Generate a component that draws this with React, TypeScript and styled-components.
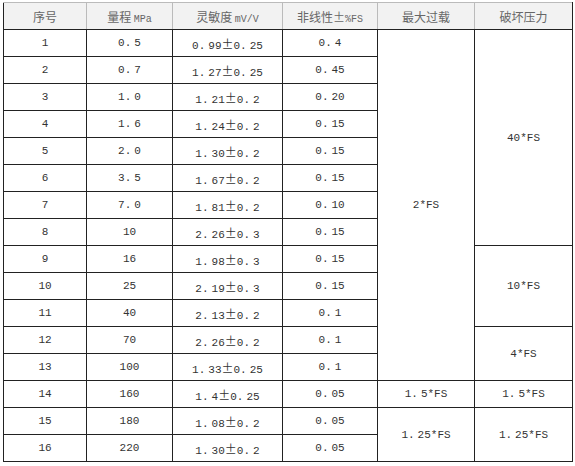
import * as React from 'react';
import styled, { createGlobalStyle } from 'styled-components';

const GlobalStyle = createGlobalStyle`
  body {
    margin: 0;
    background: #fff;
    font-family: 'Liberation Mono', 'Noto Sans CJK SC', monospace;
    font-size: 11px;
    color: #333;
  }
`;

const Table = styled.table`
  margin: 2px 0 0 3px;
  width: 569px;
  border-collapse: collapse;
  table-layout: fixed;
  border-left: 1px solid #222;
  border-right: 1px solid #222;
  border-bottom: 1px solid #222;
`;

const Th = styled.th`
  height: 26px;
  padding: 0;
  background: #f2f2f2;
  border: 1px solid #bbb;
  border-bottom: 1px solid #222;
  font-weight: normal;
  color: #666;
  text-align: center;
  font-family: 'Noto Sans CJK SC', 'Liberation Mono', sans-serif;
  font-size: 12px;

  &:first-child { border-left: 1px solid #222; }
  &:last-child { border-right: 1px solid #222; }
`;

const Unit = styled.span`
  font-family: 'Liberation Mono', monospace;
  font-size: 10px;
`;

const Td = styled.td`
  height: 26px;
  padding: 0;
  border: 1px solid #222;
  text-align: center;
  vertical-align: middle;
  white-space: nowrap;
`;

const Pm = styled.span`
  font-family: 'Noto Sans CJK SC', sans-serif;
  font-size: 12px;
`;

// the narrow gap the source font leaves after each decimal point
const Gap = styled.span`
  display: inline-block;
  width: 3px;
`;

const rows: [string, string, string, string][] = [
  ['1', '0.5', '0.99|0.25', '0.4'],
  ['2', '0.7', '1.27|0.25', '0.45'],
  ['3', '1.0', '1.21|0.2', '0.20'],
  ['4', '1.6', '1.24|0.2', '0.15'],
  ['5', '2.0', '1.30|0.2', '0.15'],
  ['6', '3.5', '1.67|0.2', '0.15'],
  ['7', '7.0', '1.81|0.2', '0.10'],
  ['8', '10', '2.26|0.3', '0.15'],
  ['9', '16', '1.98|0.3', '0.15'],
  ['10', '25', '2.19|0.3', '0.15'],
  ['11', '40', '2.13|0.2', '0.1'],
  ['12', '70', '2.26|0.2', '0.1'],
  ['13', '100', '1.33|0.25', '0.1'],
  ['14', '160', '1.4|0.25', '0.05'],
  ['15', '180', '1.08|0.2', '0.05'],
  ['16', '220', '1.30|0.2', '0.05'],
];

// extra cells for the two merged columns, keyed by row index
const overload: Record<number, [string, number]> = {
  0: ['2*FS', 13],
  13: ['1.5*FS', 1],
  14: ['1.25*FS', 2],
};
const burst: Record<number, [string, number]> = {
  0: ['40*FS', 8],
  8: ['10*FS', 3],
  11: ['4*FS', 2],
  13: ['1.5*FS', 1],
  14: ['1.25*FS', 2],
};

function Num({ v }: { v: string }) {
  const parts = v.split('.');
  return (
    <>
      {parts.map((p, i) => (
        <React.Fragment key={i}>
          {i > 0 && <>.<Gap /></>}
          {p}
        </React.Fragment>
      ))}
    </>
  );
}

function Sens({ v }: { v: string }) {
  const [a, b] = v.split('|');
  return (
    <>
      <Num v={a} />
      <Pm>±</Pm>
      <Num v={b} />
    </>
  );
}

export default function App() {
  return (
    <>
      <GlobalStyle />
      <Table>
        <colgroup>
          <col style={{ width: 83 }} />
          <col style={{ width: 86 }} />
          <col style={{ width: 110 }} />
          <col style={{ width: 95 }} />
          <col style={{ width: 97 }} />
          <col style={{ width: 98 }} />
        </colgroup>
        <thead>
          <tr>
            <Th>序号</Th>
            <Th>量程 <Unit>MPa</Unit></Th>
            <Th>灵敏度 <Unit>mV/V</Unit></Th>
            <Th>非线性±<Unit>%FS</Unit></Th>
            <Th>最大过载</Th>
            <Th>破坏压力</Th>
          </tr>
        </thead>
        <tbody>
          {rows.map((r, i) => (
            <tr key={r[0]}>
              <Td>{r[0]}</Td>
              <Td><Num v={r[1]} /></Td>
              <Td><Sens v={r[2]} /></Td>
              <Td><Num v={r[3]} /></Td>
              {overload[i] && <Td rowSpan={overload[i][1]}><Num v={overload[i][0]} /></Td>}
              {burst[i] && <Td rowSpan={burst[i][1]}><Num v={burst[i][0]} /></Td>}
            </tr>
          ))}
        </tbody>
      </Table>
    </>
  );
}
